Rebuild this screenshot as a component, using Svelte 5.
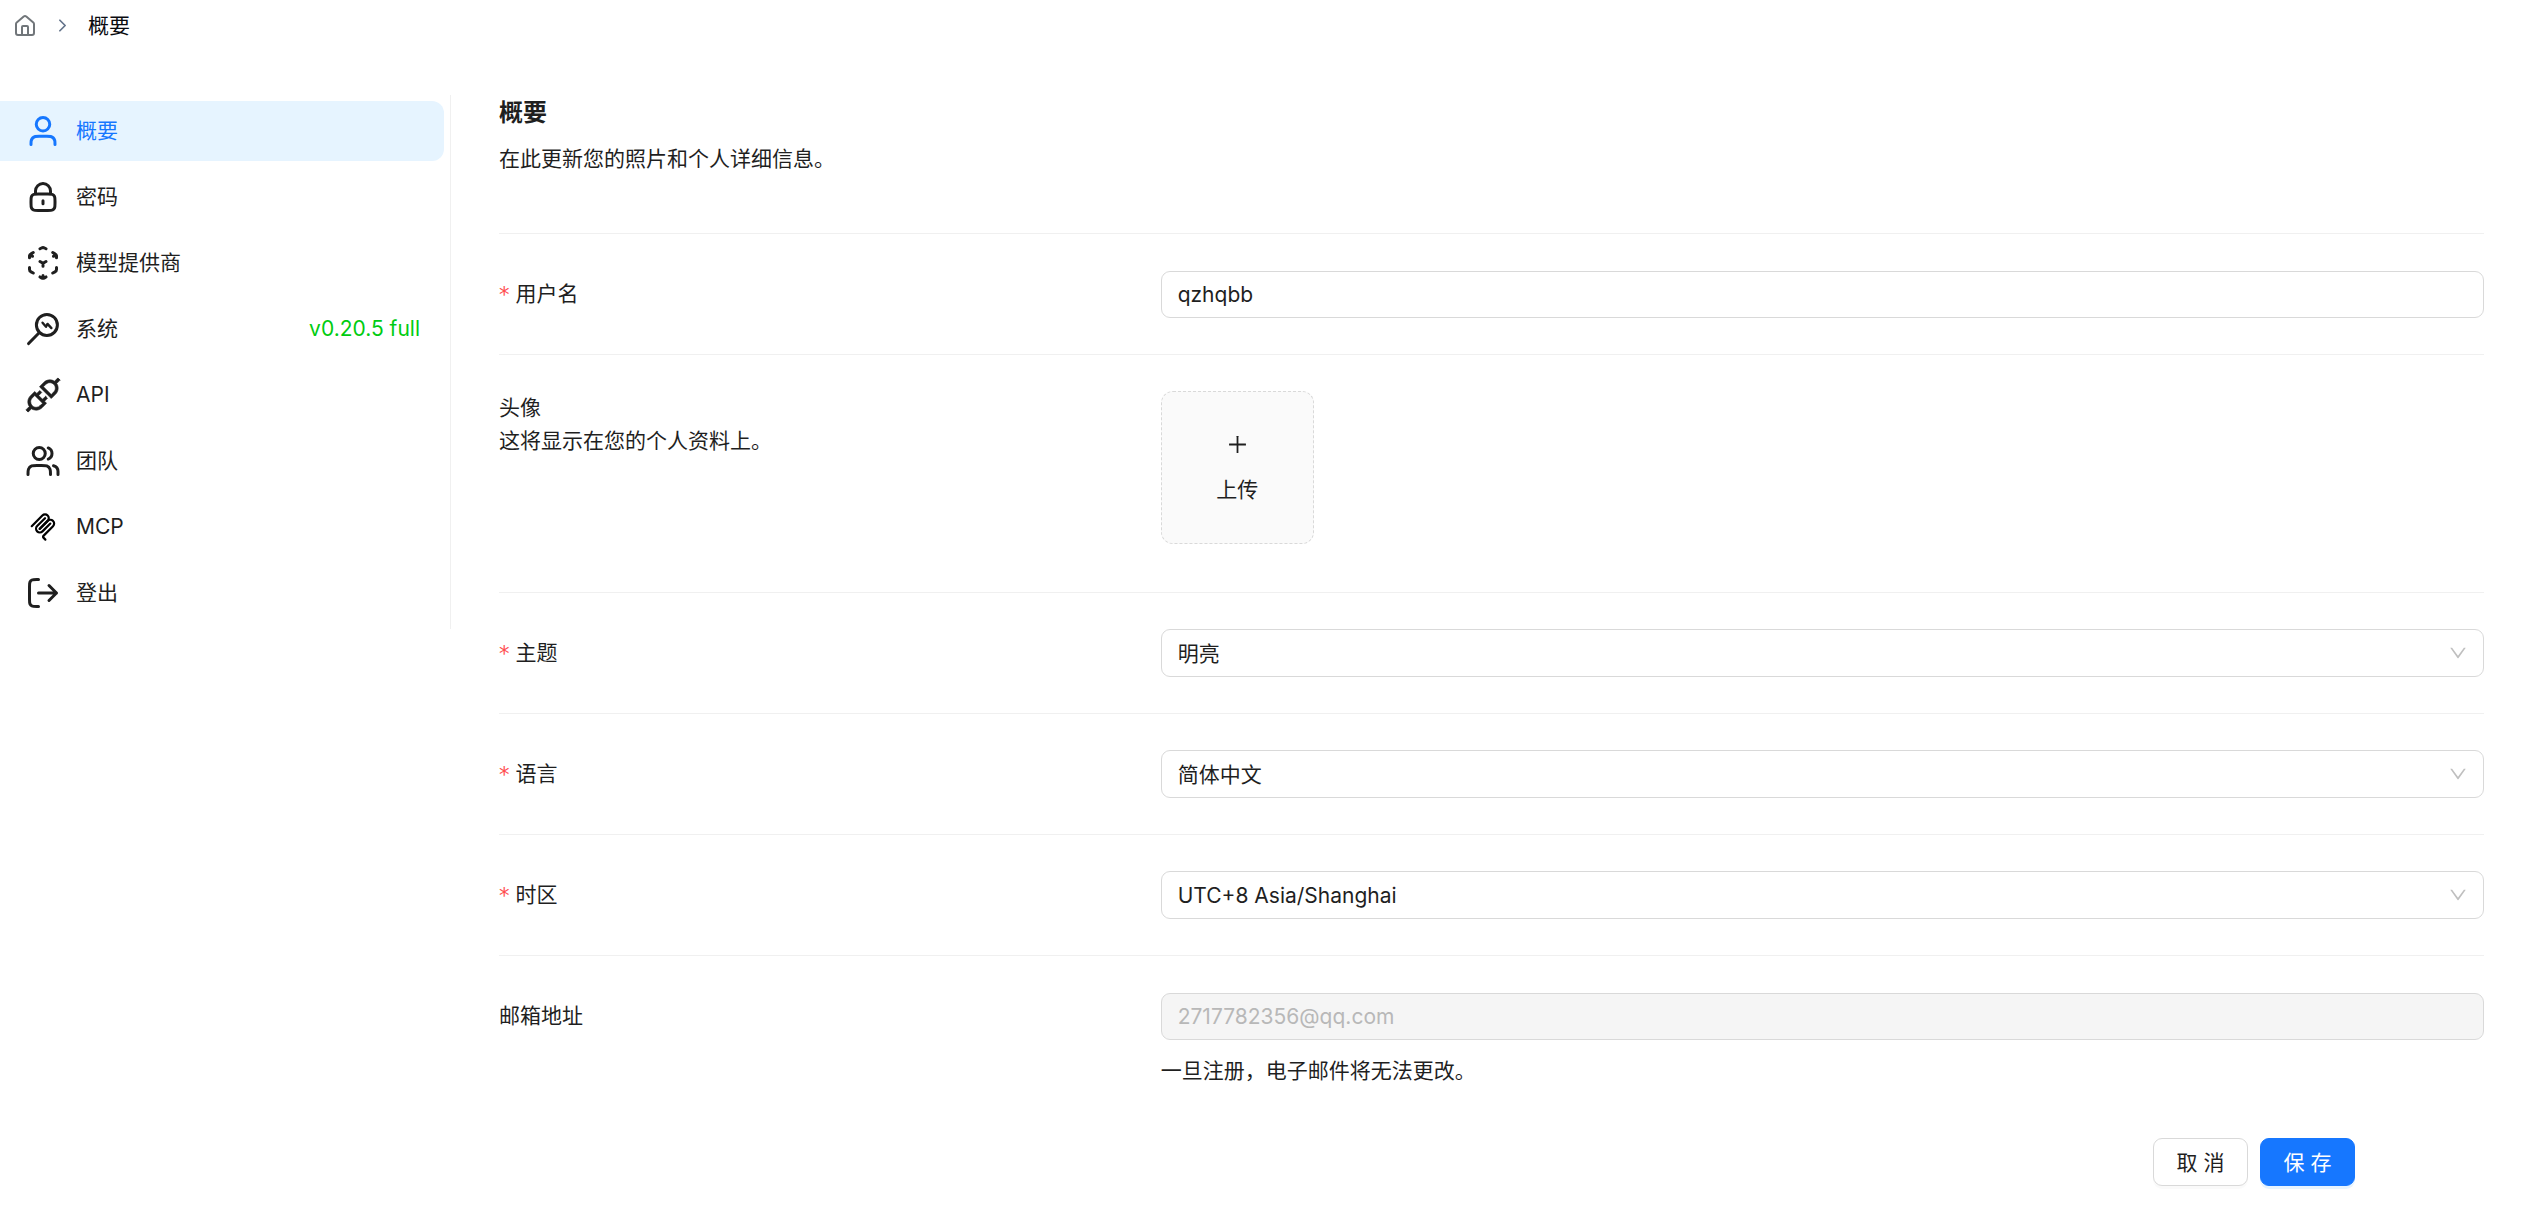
<script>
  const menu = [
    { key: 'profile', label: '概要', icon: 'user', active: true },
    { key: 'password', label: '密码', icon: 'lock' },
    { key: 'model', label: '模型提供商', icon: 'cube' },
    { key: 'system', label: '系统', icon: 'system', extra: 'v0.20.5 full' },
    { key: 'api', label: 'API', icon: 'api' },
    { key: 'team', label: '团队', icon: 'team' },
    { key: 'mcp', label: 'MCP', icon: 'mcp' },
    { key: 'logout', label: '登出', icon: 'logout' }
  ];

  const strokes = {
    user: 'M20 21C20 19.6044 20 18.9067 19.8278 18.3389C19.44 17.0605 18.4395 16.06 17.1611 15.6722C16.5933 15.5 15.8956 15.5 14.5 15.5H9.5C8.10444 15.5 7.40665 15.5 6.83886 15.6722C5.56045 16.06 4.56004 17.0605 4.17224 18.3389C4 18.9067 4 19.6044 4 21M16.5 7.5C16.5 9.98528 14.4853 12 12 12C9.51472 12 7.5 9.98528 7.5 7.5C7.5 5.01472 9.51472 3 12 3C14.4853 3 16.5 5.01472 16.5 7.5Z',
    lock: 'M17 10V8C17 5.23858 14.7614 3 12 3C9.23858 3 7 5.23858 7 8V10M12 14.5V16.5M8.8 21H15.2C16.8802 21 17.7202 21 18.362 20.673C18.9265 20.3854 19.3854 19.9265 19.673 19.362C20 18.7202 20 17.8802 20 16.2V14.8C20 13.1198 20 12.2798 19.673 11.638C19.3854 11.0735 18.9265 10.6146 18.362 10.327C17.7202 10 16.8802 10 15.2 10H8.8C7.11984 10 6.27976 10 5.63803 10.327C5.07354 10.6146 4.6146 11.0735 4.32698 11.638C4 12.2798 4 13.1198 4 14.8V16.2C4 17.8802 4 18.7202 4.32698 19.362C4.6146 19.9265 5.07354 20.3854 5.63803 20.673C6.27976 21 7.11984 21 8.8 21Z',
    cube: 'M10 2.5L11 2C11.6 1.7 12.4 1.7 13 2L14 2.5M18.5 5L20 5.9C20.6 6.2 21 6.7 21 7.3V8.5M21 15V16.3C21 17 20.6 17.5 20 17.9L18.5 18.7M14 21.3L13 21.9C12.4 22.2 11.6 22.2 11 21.9L10 21.3M5.5 18.7L4 17.9C3.4 17.5 3 17 3 16.3V15M3 8.5V7.3C3 6.7 3.4 6.2 4 5.9L5.5 5M10 11L12 12.2M12 12.2L14 11M12 12.2V14.2M3.4 6.6L5 7.5M20.6 6.6L19 7.5M12 22V20.3',
    team: 'M22 21V19C22 17.1362 20.7252 15.5701 19 15.126M15.5 3.29076C16.9659 3.88415 18 5.32131 18 7C18 8.67869 16.9659 10.1159 15.5 10.7092M17 21C17 19.1362 17 18.2044 16.6955 17.4693C16.2895 16.4892 15.5108 15.7105 14.5307 15.3045C13.7956 15 12.8638 15 11 15H8C6.13623 15 5.20435 15 4.46927 15.3045C3.48915 15.7105 2.71046 16.4892 2.30448 17.4693C2 18.2044 2 19.1362 2 21M13.5 7C13.5 9.20914 11.7091 11 9.5 11C7.29086 11 5.5 9.20914 5.5 7C5.5 4.79086 7.29086 3 9.5 3C11.7091 3 13.5 4.79086 13.5 7Z',
    logout: 'M16 17L21 12L16 7M21 12H9M9 3H7.8C6.11984 3 5.27976 3 4.63803 3.32698C4.07354 3.6146 3.6146 4.07354 3.32698 4.63803C3 5.27976 3 6.11984 3 7.8V16.2C3 17.8802 3 18.7202 3.32698 19.362C3.6146 19.9265 4.07354 20.3854 4.63803 20.673C5.27976 21 6.11984 21 7.8 21H9',
    system: 'M21.6 9.3A7 7 0 1 1 7.6 9.3A7 7 0 1 1 21.6 9.3ZM9.6 14.3L2.4 21.7'
  };

  const selects = [
    { id: 'theme', label: '主题', options: ['明亮', '暗色'] },
    { id: 'language', label: '语言', options: ['简体中文', '繁體中文', 'English'] },
    { id: 'timezone', label: '时区', options: ['UTC+8 Asia/Shanghai', 'UTC+9 Asia/Tokyo'] }
  ];
</script>

<nav class="breadcrumb" aria-label="breadcrumb">
  <a href="#home" aria-label="home">
    <svg class="home" viewBox="0 0 24 24">
      <path d="M15 21v-8a1 1 0 0 0-1-1h-4a1 1 0 0 0-1 1v8" />
      <path d="M3 10a2 2 0 0 1 .709-1.528l7-6a2 2 0 0 1 2.582 0l7 6A2 2 0 0 1 21 10v9a2 2 0 0 1-2 2H5a2 2 0 0 1-2-2z" />
    </svg>
  </a>
  <svg class="chevron" viewBox="0 0 24 24"><path d="m9 18 6-6-6-6" /></svg>
  <span>概要</span>
</nav>

<div class="layout">
  <aside>
    <ul class="menu">
      {#each menu as item (item.key)}
        <li>
          <a href={'#' + item.key} class="item" class:active={item.active}>
            {#if item.icon === 'api'}
              <svg class="icon solid" viewBox="80 80 864 864">
                <path d="M917.7 148.8l-42.4-42.4c-1.6-1.6-3.6-2.3-5.7-2.3s-4.1.8-5.7 2.3l-76.1 76.1a199.27 199.27 0 00-112.1-34.3c-51.2 0-102.4 19.5-141.5 58.6L432.3 308.7a8.03 8.03 0 000 11.3L704 591.7c1.6 1.6 3.6 2.3 5.7 2.3 2 0 4.1-.8 5.7-2.3l101.9-101.9c68.9-69 77-175.7 24.3-253.5l76.1-76.1c3.1-3.2 3.1-8.3 0-11.4zM769.1 441.7l-59.4 59.4-186.8-186.8 59.4-59.4c24.9-24.9 58.1-38.7 93.4-38.7 35.3 0 68.4 13.7 93.4 38.7 24.9 24.9 38.7 58.1 38.7 93.4 0 35.3-13.8 68.4-38.7 93.4zm-190.2 105a8.03 8.03 0 00-11.3 0L501 613.3 410.7 523l66.7-66.7c3.1-3.1 3.1-8.2 0-11.3L441 408.6a8.03 8.03 0 00-11.3 0L363 475.3l-43-43a7.85 7.85 0 00-5.7-2.3c-2 0-4.1.8-5.7 2.3L206.8 534.2c-68.9 69-77 175.7-24.3 253.5l-76.1 76.1a8.03 8.03 0 000 11.3l42.4 42.4c1.6 1.6 3.6 2.3 5.7 2.3s4.1-.8 5.7-2.3l76.1-76.1c33.7 22.9 72.9 34.3 112.1 34.3 51.2 0 102.4-19.5 141.5-58.6l101.9-101.9c3.1-3.1 3.1-8.2 0-11.3l-43-43 66.7-66.7c3.1-3.1 3.1-8.2 0-11.3l-36.6-36.2zM441.7 769.1a131.32 131.32 0 01-93.4 38.7c-35.3 0-68.4-13.7-93.4-38.7a131.32 131.32 0 01-38.7-93.4c0-35.3 13.7-68.4 38.7-93.4l59.4-59.4 186.8 186.8-59.4 59.4z" />
              </svg>
            {:else if item.icon === 'mcp'}
              <svg class="icon mcp" viewBox="-25 -25 230 230">
                <path d="M18 84.8528L85.8822 16.9706C95.2548 7.59798 110.451 7.59798 119.823 16.9706C129.196 26.3431 129.196 41.5391 119.823 50.9117L68.5581 102.177" />
                <path d="M69.2652 101.47L119.823 50.9117C129.196 41.5391 144.392 41.5391 153.765 50.9117L154.118 51.2652C163.491 60.6378 163.491 75.8338 154.118 85.2063L92.7248 146.6C89.6006 149.724 89.6006 154.789 92.7248 157.913L105.331 170.52" />
                <path d="M102.853 33.9411L52.6482 84.1457C43.2756 93.5183 43.2756 108.714 52.6482 118.087C62.0208 127.459 77.2167 127.459 86.5893 118.087L136.794 67.8822" />
              </svg>
            {:else}
              <svg class="icon" viewBox="0 0 24 24">
                <path d={strokes[item.icon]} />
                {#if item.icon === 'system'}
                  <path class="bolt" d="M11.7 7.8L14 10.5L15 8.6L17.6 11.4" />
                {/if}
              </svg>
            {/if}
            <span>{item.label}</span>
            {#if item.extra}<span class="version">{item.extra}</span>{/if}
          </a>
        </li>
      {/each}
    </ul>
  </aside>

  <main>
    <header>
      <h1>概要</h1>
      <p>在此更新您的照片和个人详细信息。</p>
    </header>

    <form>
      <div class="row">
        <label class="required" for="username">用户名</label>
        <input id="username" type="text" value="qzhqbb" />
      </div>

      <div class="row avatar">
        <div class="text">
          <div>头像</div>
          <div>这将显示在您的个人资料上。</div>
        </div>
        <button type="button" class="upload">
          <svg viewBox="64 64 896 896">
            <path d="M482 152h60q8 0 8 8v704q0 8-8 8h-60q-8 0-8-8V160q0-8 8-8z" />
            <path d="M192 474h672q8 0 8 8v60q0 8-8 8H160q-8 0-8-8v-60q0-8 8-8z" />
          </svg>
          <span>上传</span>
        </button>
      </div>

      {#each selects as field (field.id)}
        <div class="row">
          <label class="required" for={field.id}>{field.label}</label>
          <div class="select">
            <select id={field.id}>
              {#each field.options as option}<option>{option}</option>{/each}
            </select>
            <svg viewBox="64 64 896 896">
              <path d="M884 256h-75c-5.1 0-9.9 2.5-12.9 6.6L512 654.2 227.9 262.6c-3-4.1-7.8-6.6-12.9-6.6h-75c-6.5 0-10.3 7.4-6.5 12.7l352.6 486.1c12.8 17.6 39 17.6 51.7 0l352.6-486.1c3.9-5.3.1-12.7-6.4-12.7z" />
            </svg>
          </div>
        </div>
      {/each}

      <div class="row email">
        <label for="email">邮箱地址</label>
        <div>
          <input id="email" type="email" value="2717782356@qq.com" disabled />
          <p>一旦注册，电子邮件将无法更改。</p>
        </div>
      </div>

      <div class="actions">
        <button type="button" class="cancel">取 消</button>
        <button type="submit" class="save">保 存</button>
      </div>
    </form>
  </main>
</div>

<style>
  :global(body) {
    background: #fff;
    color: #1f1f1f;
    font: 21px/33px Inter, 'Noto Sans CJK SC', sans-serif;
  }
  h1, p, ul {
    margin: 0;
    padding: 0;
  }
  a {
    color: inherit;
    text-decoration: none;
  }
  svg {
    display: block;
    flex: none;
  }
  input, select, button {
    box-sizing: border-box;
    font: inherit;
    color: inherit;
  }

  .breadcrumb {
    display: flex;
    align-items: center;
    height: 51px;
    padding-left: 13px;
    gap: 15px;
    color: #0a0a0f;
  }
  .home, .chevron {
    fill: none;
    stroke: #71767a;
    stroke-width: 2;
    stroke-linecap: round;
    stroke-linejoin: round;
  }
  .home {
    width: 24px;
    height: 24px;
  }
  .chevron {
    width: 21px;
    height: 21px;
    stroke: #64748b;
  }

  .layout {
    display: flex;
    align-items: flex-start;
    padding-top: 44px;
  }
  aside {
    flex: none;
    width: 450px;
    border-right: 1px solid #f0f0f0;
  }
  .menu {
    display: flex;
    flex-direction: column;
    gap: 6px;
    padding: 6px 6px 6px 0;
    list-style: none;
  }
  .item {
    display: flex;
    align-items: center;
    gap: 15px;
    height: 60px;
    padding: 0 24px 0 25px;
    border-radius: 0 12px 12px 0;
  }
  .item span {
    padding-bottom: 2px;
  }
  .active {
    background: #e6f4ff;
    color: #1677ff;
  }
  .icon {
    width: 36px;
    height: 36px;
    fill: none;
    stroke: currentColor;
    stroke-width: 2;
    stroke-linecap: round;
    stroke-linejoin: round;
  }
  .solid {
    fill: currentColor;
    stroke-width: 15;
  }
  .mcp {
    stroke: #000;
    stroke-width: 14;
  }
  .bolt {
    stroke-width: 1.6;
  }
  .version {
    margin-left: auto;
    color: #0c1;
  }

  main {
    flex: 1;
    min-width: 0;
    padding: 0 47px 36px 48px;
  }
  header {
    height: 138px;
    border-bottom: 1px solid #f0f0f0;
  }
  h1 {
    font-size: 24px;
    line-height: 36px;
    font-weight: 700;
    margin-bottom: 11px;
  }
  .row {
    display: grid;
    grid-template-columns: 1fr 2fr;
    align-items: start;
    padding: 36px 0;
    border-bottom: 1px solid #f0f0f0;
  }
  .row label {
    line-height: 48px;
  }
  .required::before {
    content: '*';
    display: inline-block;
    margin-right: 6px;
    color: #ff4d4f;
    font-family: 'DejaVu Sans', sans-serif;
    line-height: 1;
    vertical-align: middle;
  }
  input, select {
    display: block;
    width: 100%;
    height: 48px;
    margin: 0;
    padding: 0 16px;
    border: 1px solid #d9d9d9;
    border-radius: 9px;
    background: #fff;
    outline: none;
  }
  input {
    height: 47px;
    margin-top: 1px;
  }
  input:disabled {
    background: #f5f5f5;
    color: #b8b8b8;
  }
  .select {
    display: grid;
    align-items: center;
  }
  .select > * {
    grid-area: 1 / 1;
  }
  select {
    appearance: none;
  }
  .select svg {
    justify-self: end;
    width: 18px;
    height: 18px;
    margin-right: 17px;
    fill: #bfbfbf;
    pointer-events: none;
  }
  .avatar {
    padding-bottom: 48px;
  }
  .upload {
    display: flex;
    flex-direction: column;
    align-items: center;
    justify-content: center;
    gap: 18px;
    width: 153px;
    height: 153px;
    padding: 4px 0 0;
    border: 1px dashed #d9d9d9;
    border-radius: 12px;
    background: #fafafa;
  }
  .upload svg {
    width: 21px;
    height: 21px;
    fill: currentColor;
  }
  .email {
    padding-bottom: 0;
    border: 0;
  }
  .email p {
    padding-top: 14px;
  }
  .actions {
    display: flex;
    justify-content: flex-end;
    gap: 12px;
    padding: 51px 129px 0 0;
  }
  .actions button {
    min-width: 95px;
    height: 48px;
    padding: 0 16px;
    border: 1px solid #d9d9d9;
    border-radius: 9px;
    background: #fff;
    box-shadow: 0 3px 0 rgba(0, 0, 0, 0.02);
  }
  .actions .save {
    border-color: #1677ff;
    background: #1677ff;
    color: #fff;
    box-shadow: 0 3px 0 rgba(5, 145, 255, 0.1);
  }
</style>
